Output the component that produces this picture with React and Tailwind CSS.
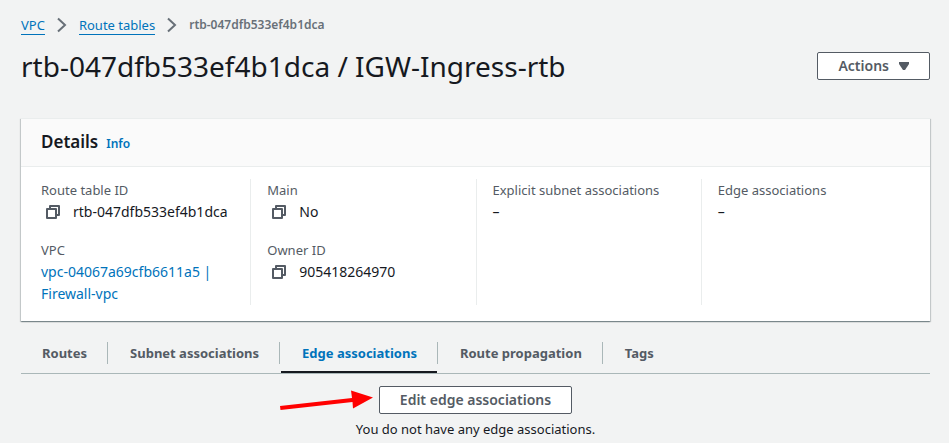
import React from "react";

function Chevron() {
  return (
    <svg className="h-4 w-3 shrink-0" viewBox="0 0 12 16" fill="none" stroke="#687078" strokeWidth="2" aria-hidden="true">
      <path d="M2 1.500 9 8l-7 6.500" />
    </svg>
  );
}

function CopyButton({ label }) {
  return (
    <button type="button" aria-label={label} className="mr-3 ml-1 flex h-4 w-4 shrink-0 items-center justify-center">
      <svg className="h-4 w-4" viewBox="0 0 16 16" fill="none" stroke="#545b64" strokeWidth="2" aria-hidden="true">
        <path d="M2 5h9v9H2z" strokeLinejoin="round" />
        <path d="M5 5V2h9v9h-3" strokeLinejoin="round" />
      </svg>
    </button>
  );
}

function Field({ label, children }) {
  return (
    <div>
      <dt className="text-[#545b64]">{label}</dt>
      <dd className="text-[14px] leading-[22px]">{children}</dd>
    </div>
  );
}

function Copyable({ name, value }) {
  return (
    <div className="flex items-center">
      <CopyButton label={`Copy ${name}`} />
      <span>{value}</span>
    </div>
  );
}

const column = "flex flex-col gap-4 px-4";
const divided = "flex flex-col gap-4 border-l border-[#eaeded] px-4";

const tabs = ["Routes", "Subnet associations", "Edge associations", "Route propagation", "Tags"];

function Tab({ label, active, last }) {
  return (
    <div className="flex items-start">
      <button
        type="button"
        role="tab"
        aria-selected={active}
        className={
          active
            ? "h-[31px] border-b-2 border-[#16191f] pr-5 pb-[7px] pl-[21px] font-bold text-[#0073bb]"
            : "h-[31px] border-b-2 border-transparent pr-5 pb-[7px] pl-[21px] font-bold text-[#545b64]"
        }
      >
        {label}
      </button>
      {!last && <span className="mr-px h-[22px] w-px bg-[#aab7b8]" />}
    </div>
  );
}

export default function App() {
  return (
    <main className="min-h-screen bg-[#f2f3f3] pt-3.5 pr-[19px] pl-[21px] font-['Noto_Sans',sans-serif] text-[13px] leading-[22px] text-[#16191f]">
      <nav aria-label="Breadcrumb">
        <ol className="flex items-center gap-[11px]">
          <li>
            <a href="#vpc" className="block h-5 border-b border-[#0073bb] leading-[20px] text-[#0073bb]">VPC</a>
          </li>
          <li aria-hidden="true"><Chevron /></li>
          <li>
            <a href="#route-tables" className="block h-5 border-b border-[#0073bb] leading-[20px] text-[#0073bb]">Route tables</a>
          </li>
          <li aria-hidden="true"><Chevron /></li>
          <li className="text-[12px] font-semibold text-[#687078]" aria-current="page">rtb-047dfb533ef4b1dca</li>
        </ol>
      </nav>

      <header className="mt-3 flex items-center justify-between">
        <h1 className="text-[28px] leading-9">rtb-047dfb533ef4b1dca / IGW-Ingress-rtb</h1>
        <button type="button" className="flex h-7 items-center gap-2.5 rounded-xs border border-[#545b64] bg-white px-5 pb-px text-[14px] font-semibold text-[#545b64]">
          Actions
          <svg className="h-2 w-2.5" viewBox="0 0 10 8" fill="#545b64" aria-hidden="true">
            <path d="M0 0h10v2L6 8H4L0 2z" />
          </svg>
        </button>
      </header>

      <section className="mt-[34px] border-t border-[#eaeded] bg-white shadow-[0_1px_1px_0_rgba(0,28,36,0.3),1px_1px_1px_0_rgba(0,28,36,0.15),-1px_1px_1px_0_rgba(0,28,36,0.15)]">
        <div className="flex items-baseline gap-2 border-b border-[#eaeded] bg-[#fafafa] px-5 pt-3 pb-[11px]">
          <h2 className="text-[17px] font-semibold">Details</h2>
          <a href="#info" className="text-[12px] font-semibold text-[#0073bb]">Info</a>
        </div>
        <dl className="grid grid-cols-4 px-1 pt-3 pb-4">
          <div className={column}>
            <Field label="Route table ID">
              <Copyable name="route table ID" value="rtb-047dfb533ef4b1dca" />
            </Field>
            <Field label="VPC">
              <a href="#vpc-details" className="text-[#0073bb]">vpc-04067a69cfb6611a5 | <br />Firewall-vpc</a>
            </Field>
          </div>
          <div className={divided}>
            <Field label="Main">
              <Copyable name="main" value="No" />
            </Field>
            <Field label="Owner ID">
              <Copyable name="owner ID" value="905418264970" />
            </Field>
          </div>
          <div className={divided}>
            <Field label="Explicit subnet associations">–</Field>
          </div>
          <div className={divided}>
            <Field label="Edge associations">–</Field>
          </div>
        </dl>
      </section>

      <div role="tablist" className="mt-[21px] flex border-b border-[#aab7b8]">
        {tabs.map((label, i) => (
          <Tab key={label} label={label} active={i === 2} last={i === tabs.length - 1} />
        ))}
      </div>

      <section className="flex flex-col items-center pt-3">
        <div className="relative">
          <button type="button" className="flex h-7 items-center rounded-xs border border-[#545b64] bg-white px-5 pb-px text-[14px] font-semibold text-[#545b64]">
            Edit edge associations
          </button>
          <svg className="absolute top-0 right-full h-7 w-[100px]" viewBox="0 0 100 28" fill="#ff0000" aria-hidden="true">
            <path d="M1 20 73 12 72 4.500 94 11.500 74 22.500 73.500 16 1.500 24z" />
          </svg>
        </div>
        <p className="mt-1">You do not have any edge associations.</p>
      </section>
    </main>
  );
}
